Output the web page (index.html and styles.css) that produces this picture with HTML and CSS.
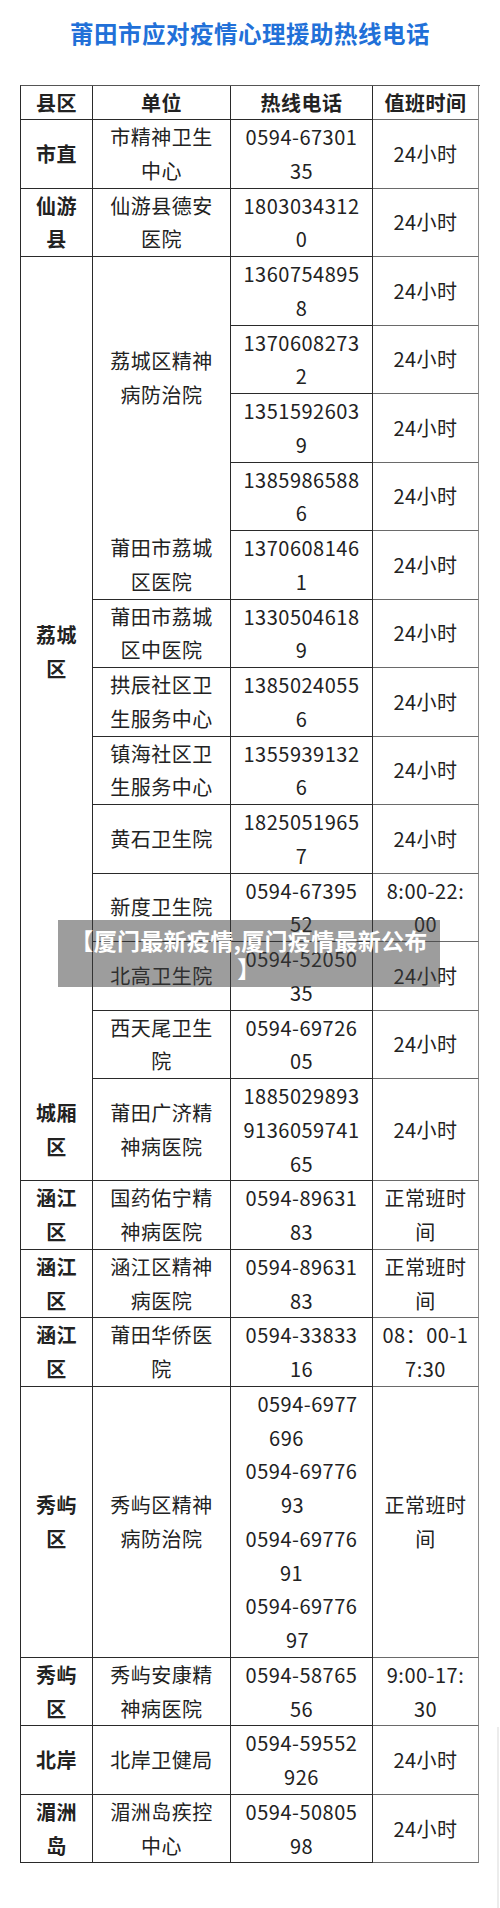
FILE: index.html
```html
<!DOCTYPE html>
<html lang="zh-CN">
<head>
<meta charset="utf-8">
<title>莆田市应对疫情心理援助热线电话</title>
<link rel="stylesheet" href="styles.css">
</head>
<body>
<div class="page">
  <h1 class="title">莆田市应对疫情心理援助热线电话</h1>

  <div class="sheet">
    <div class="c h"><div class="t">县区</div></div>
    <div class="c h"><div class="t">单位</div></div>
    <div class="c h"><div class="t">热线电话</div></div>
    <div class="c h last"><div class="t">值班时间</div></div>

    <div class="c d"><div class="t">市直</div></div>
    <div class="c"><div class="t">市精神卫生<br>中心</div></div>
    <div class="c"><div class="t">0594-67301<br>35</div></div>
    <div class="c last"><div class="t">24小时</div></div>

    <div class="c d"><div class="t">仙游<br>县</div></div>
    <div class="c"><div class="t">仙游县德安<br>医院</div></div>
    <div class="c"><div class="t">1803034312<br>0</div></div>
    <div class="c last"><div class="t">24小时</div></div>

    <div class="c d span12 open lift"><div class="t">荔城<br>区</div></div>
    <div class="c span4 open lift"><div class="t">荔城区精神<br>病防治院</div></div>
    <div class="c"><div class="t">1360754895<br>8</div></div>
    <div class="c last"><div class="t">24小时</div></div>

    <div class="c"><div class="t">1370608273<br>2</div></div>
    <div class="c last"><div class="t">24小时</div></div>

    <div class="c"><div class="t">1351592603<br>9</div></div>
    <div class="c last"><div class="t">24小时</div></div>

    <div class="c"><div class="t">1385986588<br>6</div></div>
    <div class="c last"><div class="t">24小时</div></div>

    <div class="c"><div class="t">莆田市荔城<br>区医院</div></div>
    <div class="c"><div class="t">1370608146<br>1</div></div>
    <div class="c last"><div class="t">24小时</div></div>

    <div class="c"><div class="t">莆田市荔城<br>区中医院</div></div>
    <div class="c"><div class="t">1330504618<br>9</div></div>
    <div class="c last"><div class="t">24小时</div></div>

    <div class="c"><div class="t">拱辰社区卫<br>生服务中心</div></div>
    <div class="c"><div class="t">1385024055<br>6</div></div>
    <div class="c last"><div class="t">24小时</div></div>

    <div class="c"><div class="t">镇海社区卫<br>生服务中心</div></div>
    <div class="c"><div class="t">1355939132<br>6</div></div>
    <div class="c last"><div class="t">24小时</div></div>

    <div class="c"><div class="t">黄石卫生院</div></div>
    <div class="c"><div class="t">1825051965<br>7</div></div>
    <div class="c last"><div class="t">24小时</div></div>

    <div class="c"><div class="t">新度卫生院</div></div>
    <div class="c"><div class="t">0594-67395<br>52</div></div>
    <div class="c last"><div class="t">8:00-22:<br>00</div></div>

    <div class="c"><div class="t">北高卫生院</div></div>
    <div class="c"><div class="t">0594-52050<br>35</div></div>
    <div class="c last"><div class="t">24小时</div></div>

    <div class="c"><div class="t">西天尾卫生<br>院</div></div>
    <div class="c"><div class="t">0594-69726<br>05</div></div>
    <div class="c last"><div class="t">24小时</div></div>

    <div class="c d"><div class="t">城厢<br>区</div></div>
    <div class="c"><div class="t">莆田广济精<br>神病医院</div></div>
    <div class="c"><div class="t">1885029893<br>9136059741<br>65</div></div>
    <div class="c last"><div class="t">24小时</div></div>

    <div class="c d"><div class="t">涵江<br>区</div></div>
    <div class="c"><div class="t">国药佑宁精<br>神病医院</div></div>
    <div class="c"><div class="t">0594-89631<br>83</div></div>
    <div class="c last"><div class="t">正常班时<br>间</div></div>

    <div class="c d"><div class="t">涵江<br>区</div></div>
    <div class="c"><div class="t">涵江区精神<br>病医院</div></div>
    <div class="c"><div class="t">0594-89631<br>83</div></div>
    <div class="c last"><div class="t">正常班时<br>间</div></div>

    <div class="c d"><div class="t">涵江<br>区</div></div>
    <div class="c"><div class="t">莆田华侨医<br>院</div></div>
    <div class="c"><div class="t">0594-33833<br>16</div></div>
    <div class="c last"><div class="t">08：00-1<br>7:30</div></div>

    <div class="c d"><div class="t">秀屿<br>区</div></div>
    <div class="c"><div class="t">秀屿区精神<br>病防治院</div></div>
    <div class="c"><div class="t">
      <div class="pl12">0594-6977</div>
      <div class="pr30">696</div>
      <div>0594-69776</div>
      <div class="pr18">93</div>
      <div>0594-69776</div>
      <div class="pr20">91</div>
      <div>0594-69776</div>
      <div class="pr8">97</div>
    </div></div>
    <div class="c last"><div class="t">正常班时<br>间</div></div>

    <div class="c d"><div class="t">秀屿<br>区</div></div>
    <div class="c"><div class="t">秀屿安康精<br>神病医院</div></div>
    <div class="c"><div class="t">0594-58765<br>56</div></div>
    <div class="c last"><div class="t">9:00-17:<br>30</div></div>

    <div class="c d"><div class="t">北岸</div></div>
    <div class="c"><div class="t">北岸卫健局</div></div>
    <div class="c"><div class="t">0594-59552<br>926</div></div>
    <div class="c last"><div class="t">24小时</div></div>

    <div class="c d"><div class="t">湄洲<br>岛</div></div>
    <div class="c"><div class="t">湄洲岛疾控<br>中心</div></div>
    <div class="c"><div class="t">0594-50805<br>98</div></div>
    <div class="c last"><div class="t">24小时</div></div>
  </div>

  <div class="banner">【厦门最新疫情,厦门疫情最新公布<br>】</div>
  <div class="edge"></div>
</div>
</body>
</html>
```

FILE: styles.css
```css
html, body {
  margin: 0;
  padding: 0;
  background: #ffffff;
}

body {
  font-family: "Noto Sans CJK SC", "Noto Sans", sans-serif;
  color: #222222;
}

.page {
  position: relative;
  width: 500px;
  height: 1908px;
  overflow: hidden;
}

.title {
  margin: 0;
  padding-top: 16px;
  height: 34px;
  line-height: 34px;
  font-size: 23.5px;
  font-weight: 700;
  letter-spacing: 0.5px;
  color: #2170d8;
  text-align: center;
}

.sheet {
  margin: 35px 0 0 20px;
  width: 459px;
  display: grid;
  grid-template-columns: 72px 138px 142px 106px;
  border-left: 1px solid #2a2a2a;
  border-top: 1px solid #555555;
}

.c {
  display: flex;
  align-items: center;
  justify-content: center;
  border-right: 1px solid #2a2a2a;
  border-bottom: 1px solid #2a2a2a;
  font-size: 20px;
  line-height: 33.75px;
  letter-spacing: 0.5px;
  text-align: center;
  white-space: nowrap;
}

.c.last {
  border-right-color: #8a8a8a;
  border-bottom-color: #6a6a6a;
}

.c.h {
  font-weight: 700;
  line-height: 33px;
}

.c.d {
  font-weight: 700;
}

.t {
  text-align: center;
}

.span12 {
  grid-row: span 12;
}

.span4 {
  grid-row: span 4;
}

.open {
  border-bottom: none;
}

.lift {
  padding-bottom: 33px;
}

.pl12 { padding-left: 12px; }
.pr30 { padding-right: 30px; }
.pr18 { padding-right: 18px; }
.pr20 { padding-right: 20px; }
.pr8 { padding-right: 8px; }

.banner {
  position: absolute;
  left: 58px;
  top: 920px;
  width: 382px;
  height: 61px;
  padding-top: 6px;
  background: rgba(60, 60, 60, 0.5);
  color: #ffffff;
  font-size: 23px;
  font-weight: 700;
  line-height: 28px;
  letter-spacing: 0.3px;
  text-align: center;
  white-space: nowrap;
}

.edge {
  position: absolute;
  right: 1px;
  top: 1727px;
  bottom: 0;
  width: 2px;
  background: #ececec;
}
```
